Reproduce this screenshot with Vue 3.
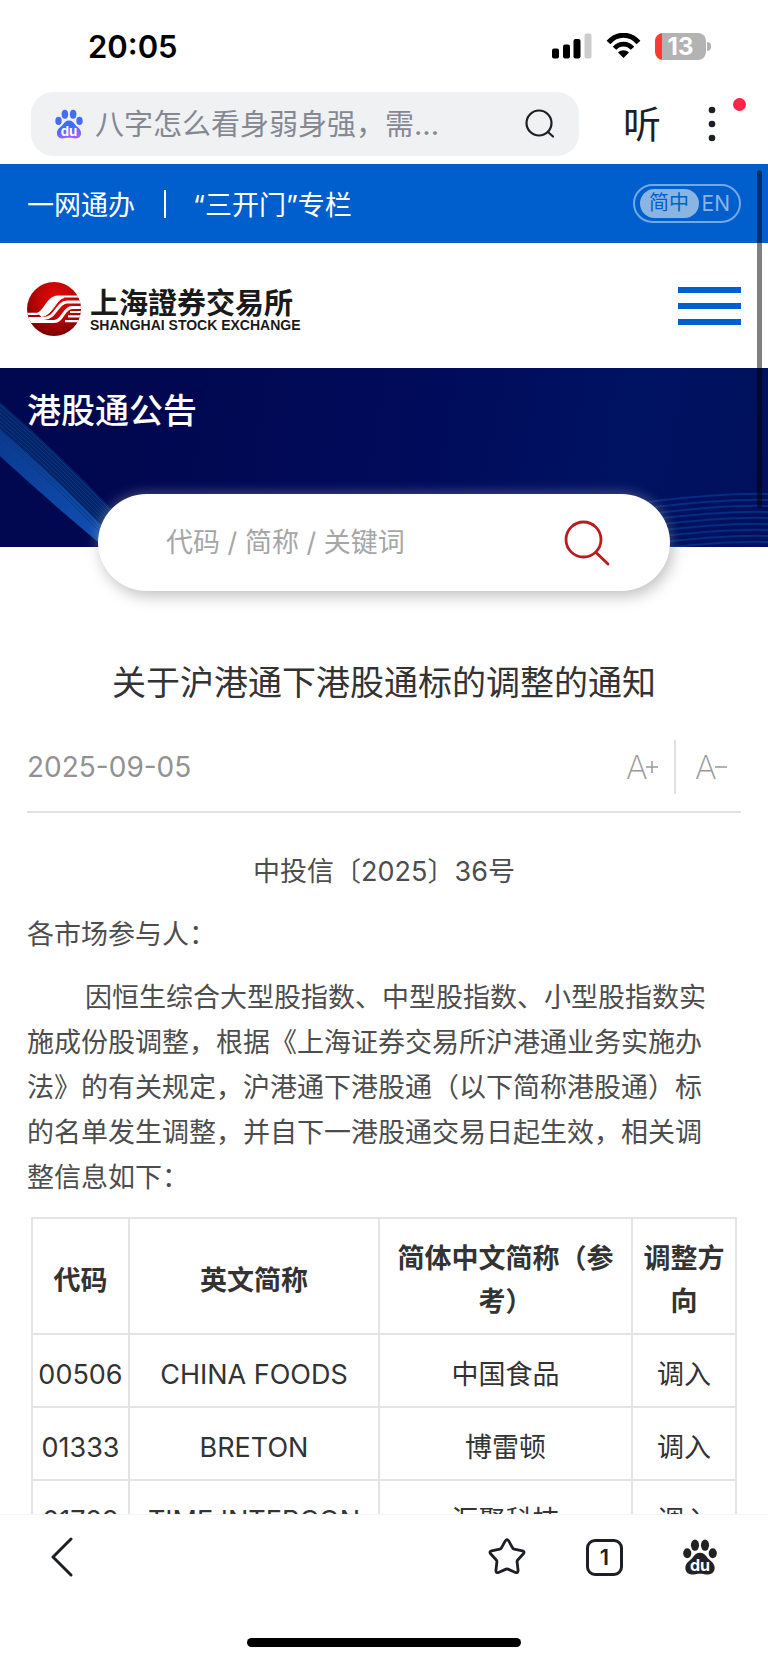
<script setup>
import { ref } from 'vue'

const query = ref('')
const keyword = ref('')
const paragraph =
  '因恒生综合大型股指数、中型股指数、小型股指数实施成份股调整，根据《上海证券交易所沪港通业务实施办法》的有关规定，沪港通下港股通（以下简称港股通）标的名单发生调整，并自下一港股通交易日起生效，相关调整信息如下：'
const rows = [
  { code: '00506', en: 'CHINA FOODS', cn: '中国食品', dir: '调入' },
  { code: '01333', en: 'BRETON', cn: '博雷顿', dir: '调入' },
  { code: '01729', en: 'TIME INTERCON', cn: '汇聚科技', dir: '调入' },
]
const waves = Array.from({ length: 10 }, (_, i) => i * 6)
const strands = Array.from({ length: 9 }, (_, i) => i * 4)
</script>

<template>
  <div class="screen">
    <header class="status">
      <span class="clock">20:05</span>
      <div class="status-icons">
        <svg width="40" height="26" viewBox="0 0 40 26" aria-hidden="true">
          <rect x="0" y="15.500" width="7" height="10" rx="2" />
          <rect x="11" y="11.500" width="7" height="14" rx="2" />
          <rect x="21.500" y="6" width="7" height="19.500" rx="2" />
          <rect x="32.500" y="0.500" width="7" height="25" rx="2" fill="#ccc" />
        </svg>
        <svg width="35" height="26" viewBox="0 0 35 26" aria-hidden="true">
          <path d="M2.500 9.500C11-.2 24-.2 32.500 9.500" fill="none" stroke="#000" stroke-width="5" />
          <path d="M8.500 15.300C13.500 9.700 21.500 9.700 26.500 15.300" fill="none" stroke="#000" stroke-width="4.600" />
          <path d="M12 19.500c3.200-3 7.800-3 11 0L17.500 25z" />
        </svg>
        <div class="battery"><span>13</span></div>
      </div>
    </header>

    <div class="browser-bar">
      <label class="omnibox">
        <svg width="28" height="30" viewBox="0 0 36 38" aria-hidden="true">
          <defs>
            <linearGradient id="paw" x1="0" y1="0" x2="0.300" y2="1">
              <stop offset="0.450" stop-color="#3f6cf5" />
              <stop offset="1" stop-color="#9a62ff" />
            </linearGradient>
          </defs>
          <g fill="#446cf5">
            <ellipse cx="4.500" cy="15" rx="4.100" ry="5.200" />
            <ellipse cx="12.700" cy="6.500" rx="4.200" ry="5.800" />
            <ellipse cx="23.300" cy="6.500" rx="4.200" ry="5.800" />
            <ellipse cx="31.500" cy="15" rx="4.100" ry="5.200" />
          </g>
          <path fill="url(#paw)" d="M18 14.500c3.500 0 5.500 2 7.500 4.800 2.500 3.600 8 5.700 8 11.200 0 4-2.500 7-6.500 7-3.500 0-5.500-.8-9-.8s-5.500.8-9 .8c-4 0-6.500-3-6.500-7 0-5.500 5.500-7.600 8-11.200 2-2.800 4-4.800 7.500-4.800z" />
          <text x="18" y="34" text-anchor="middle" class="du">du</text>
        </svg>
        <input v-model="query" type="text" aria-label="搜索" placeholder="八字怎么看身弱身强，需..." />
        <svg width="30" height="30" viewBox="0 0 30 30" fill="none" stroke="#1d1f26" stroke-width="2.200" stroke-linecap="round" aria-hidden="true">
          <circle cx="14" cy="14" r="12.500" />
          <path d="M23.500 23.500l4.500 4" />
        </svg>
      </label>
      <button class="listen" type="button">听</button>
      <button class="more" type="button" aria-label="更多">
        <svg width="8" height="36" viewBox="0 0 8 36" fill="#1d1f26">
          <circle cx="4" cy="4" r="3.300" /><circle cx="4" cy="18" r="3.300" /><circle cx="4" cy="32" r="3.300" />
        </svg>
        <i class="dot"></i>
      </button>
    </div>

    <main class="viewport">
      <nav class="topnav">
        <a href="#">一网通办</a>
        <i class="sep"></i>
        <a href="#">“三开门”专栏</a>
        <button class="lang" type="button"><b>简中</b><span>EN</span></button>
      </nav>

      <div class="brand">
        <a href="#" class="logo">
          <svg width="54" height="54" viewBox="0 0 54 54" aria-hidden="true">
            <defs>
              <radialGradient id="ball" cx="0.550" cy="0.300" r="0.700">
                <stop offset="0" stop-color="#e60a0a" />
                <stop offset="0.500" stop-color="#c00505" />
                <stop offset="1" stop-color="#7a0000" />
              </radialGradient>
              <clipPath id="round"><circle cx="27" cy="27" r="27" /></clipPath>
            </defs>
            <circle cx="27" cy="27" r="27" fill="url(#ball)" />
            <g clip-path="url(#round)" fill="none" stroke="#fff">
              <path d="M0 31.800H10C17 31.800 20 14.500 31 14.500H54" stroke-width="2.200" />
              <path d="M11 31.500C18 30 21 15.500 31 15.500H37C29 17 25 34.500 14 34.500" fill="#fff" stroke-width="1" />
              <path d="M0 36.500H17C29 36.500 30 20 40 20H54" stroke-width="3" />
              <path d="M0 39.500H27C36 39.500 36 26 45 25.500H54" stroke-width="3" />
              <path d="M41 34.300H54M38 39.200H54M43 30H54" stroke-width="2.200" />
            </g>
          </svg>
          <span class="wordmark">
            <span class="cn">上海證券交易所</span>
            <span class="en">SHANGHAI STOCK EXCHANGE</span>
          </span>
        </a>
        <button class="menu" type="button" aria-label="菜单"><i></i><i></i><i></i></button>
      </div>

      <section class="banner">
        <svg class="ribbon" width="130" height="145" viewBox="0 0 130 145" aria-hidden="true">
          <defs>
            <linearGradient id="beam" x1="0" y1="0" x2="1" y2="1">
              <stop offset="0" stop-color="#0a3a90" />
              <stop offset="1" stop-color="#1050b4" />
            </linearGradient>
          </defs>
          <path d="M0 0Q62 54 122 118V145H104Q50 100 0 54z" fill="#04236a" />
          <path d="M0 28Q58 78 112 134V145H104Q50 100 0 54z" fill="url(#beam)" />
          <path v-for="s in strands" :key="s" :d="`M0 ${s + 3}Q62 ${s + 57} 122 ${s + 121}`" fill="none" stroke="#0a3a80" stroke-width="1" />
        </svg>
        <svg class="ripples" width="120" height="54" viewBox="0 0 120 54" aria-hidden="true">
          <path v-for="w in waves" :key="w" :d="`M0 ${w + 9}C40 ${w + 4} 80 ${w} 120 ${w + 1}`" fill="none" stroke="#062c80" stroke-width="2" />
        </svg>
        <h2>港股通公告</h2>
        <form class="search" @submit.prevent>
          <input v-model="keyword" type="text" aria-label="代码 / 简称 / 关键词" placeholder="代码 / 简称 / 关键词" />
          <button type="submit" aria-label="搜索">
            <svg width="46" height="46" viewBox="0 0 46 46" fill="none" stroke="#b81c1c" stroke-width="2.800" stroke-linecap="round">
              <circle cx="19.500" cy="19.500" r="17.500" />
              <path d="M32 32.500l12 11.500" />
            </svg>
          </button>
        </form>
      </section>

      <article>
        <h1>关于沪港通下港股通标的调整的通知</h1>
        <div class="meta">
          <time datetime="2025-09-05">2025-09-05</time>
          <button class="size larger" type="button" aria-label="放大字号">
            A<svg width="12" height="12" viewBox="0 0 12 12" stroke="#999" stroke-width="1.500"><path d="M0 6h12M6 0v12" /></svg>
          </button>
          <button class="size smaller" type="button" aria-label="缩小字号">
            A<svg width="12" height="12" viewBox="0 0 12 12" stroke="#999" stroke-width="1.500"><path d="M0 6h12" /></svg>
          </button>
        </div>
        <p class="docno">中投信〔2025〕36号</p>
        <p>各市场参与人：</p>
        <p class="body">{{ paragraph }}</p>
        <table>
          <colgroup><col class="c1" /><col class="c2" /><col /><col class="c4" /></colgroup>
          <thead>
            <tr><th>代码</th><th>英文简称</th><th>简体中文简称（参考）</th><th>调整方向</th></tr>
          </thead>
          <tbody>
            <tr v-for="r in rows" :key="r.code">
              <td>{{ r.code }}</td><td>{{ r.en }}</td><td>{{ r.cn }}</td><td>{{ r.dir }}</td>
            </tr>
          </tbody>
        </table>
      </article>
      <i class="scrollbar"></i>
    </main>

    <footer class="toolbar">
      <div class="tools">
        <button type="button" class="back" aria-label="返回">
          <svg width="22" height="40" viewBox="0 0 22 40" fill="none" stroke="#1d1f26" stroke-width="3" stroke-linecap="round" stroke-linejoin="round"><path d="M20 2L2 20l18 18" /></svg>
        </button>
        <button type="button" aria-label="收藏">
          <svg width="38" height="38" viewBox="0 0 38 38" fill="none" stroke="#1d1f26" stroke-width="2.800" stroke-linejoin="round">
            <path d="M17.300 2.900q1.700-2.600 3.400 0l4 7.200q.5.900 1.500 1.100l8.200 1.600q2.700.8 1 3l-5.700 6.200q-.7.800-.6 1.800l1 8.700q0 2.900-2.600 2l-7.600-3.400q-.9-.4-1.800 0l-7.600 3.400q-2.600.9-2.600-2l1-8.700q.1-1-.6-1.800l-5.700-6.200q-1.700-2.200 1-3l8.200-1.600q1-.2 1.500-1.100z" />
          </svg>
        </button>
        <button type="button" class="tab" aria-label="标签页"><span>1</span></button>
        <button type="button" aria-label="首页">
          <svg width="34" height="36" viewBox="0 0 36 38" fill="#222" aria-hidden="true">
            <ellipse cx="4.500" cy="15" rx="4.300" ry="5.300" />
            <ellipse cx="12.700" cy="6.500" rx="4.300" ry="6" />
            <ellipse cx="23.300" cy="6.500" rx="4.300" ry="6" />
            <ellipse cx="31.500" cy="15" rx="4.300" ry="5.300" />
            <path d="M18 14.500c3.500 0 5.500 2 7.500 4.800 2.500 3.600 8 5.700 8 11.200 0 4-2.500 7-6.500 7-3.500 0-5.500-.8-9-.8s-5.500.8-9 .8c-4 0-6.500-3-6.500-7 0-5.500 5.500-7.600 8-11.200 2-2.800 4-4.800 7.500-4.800z" />
            <text x="18" y="34" text-anchor="middle" class="du">du</text>
          </svg>
        </button>
      </div>
      <i class="home"></i>
    </footer>
  </div>
</template>

<style>
body {
  margin: 0;
  background: #fff;
}
</style>

<style scoped>
* {
  box-sizing: border-box;
}
.screen {
  display: flex;
  flex-direction: column;
  height: 100vh;
  overflow: hidden;
  background: #fff;
  color: #333;
  font-family: Inter, "Noto Sans CJK SC", sans-serif;
  font-size: 27px;
}
button {
  padding: 0;
  border: 0;
  background: none;
  color: inherit;
  font: inherit;
  cursor: pointer;
}
input {
  flex: 1;
  min-width: 0;
  padding: 0;
  border: 0;
  outline: 0;
  background: none;
  font: inherit;
}
a {
  color: inherit;
  text-decoration: none;
}
svg {
  display: block;
  flex: none;
}
.du {
  fill: #fff;
  font: 700 17px Inter, sans-serif;
}
.status {
  display: flex;
  flex: none;
  align-items: center;
  justify-content: space-between;
  height: 92px;
  padding: 0 56px 0 88px;
}
.clock {
  color: #000;
  font-size: 31px;
  font-weight: 600;
}
.status-icons {
  display: flex;
  align-items: center;
  gap: 14px;
}
.battery {
  position: relative;
  width: 51px;
  height: 27px;
  margin-right: 6px;
  border-radius: 8px;
  background: linear-gradient(90deg, #ff3b30 7px, #b3b3b3 7px);
  color: #fff;
  font-size: 24px;
  font-weight: 700;
  line-height: 27px;
  text-align: center;
}
.battery::after {
  content: "";
  position: absolute;
  top: 9px;
  right: -5px;
  width: 4px;
  height: 9px;
  border-radius: 0 4px 4px 0;
  background: #b3b3b3;
}
.browser-bar {
  display: flex;
  flex: none;
  align-items: center;
  height: 64px;
  margin: 0 19px 8px 31px;
}
.omnibox {
  display: flex;
  flex: 1;
  align-items: center;
  gap: 12px;
  min-width: 0;
  height: 64px;
  padding: 0 24px;
  border-radius: 22px;
  background: #eff1f3;
  font-size: 29px;
}
.omnibox input::placeholder {
  color: #858893;
  opacity: 1;
}
.listen {
  flex: none;
  margin-left: 44px;
  color: #1d1f26;
  font-size: 38px;
  line-height: 64px;
}
.more {
  position: relative;
  display: flex;
  flex: none;
  align-items: center;
  width: 88px;
  height: 64px;
  padding-left: 47px;
}
.dot {
  position: absolute;
  top: 6px;
  right: 3px;
  width: 13px;
  height: 13px;
  border-radius: 50%;
  background: #ff2449;
}
.viewport {
  position: relative;
  flex: 1;
  min-height: 0;
  overflow: hidden;
}
.topnav {
  display: flex;
  align-items: center;
  height: 79px;
  padding: 0 27px;
  background: #005fcc;
  color: #fff;
}
.sep {
  width: 2px;
  height: 28px;
  margin: 0 27px 0 29px;
  background: #fff;
}
.lang {
  display: flex;
  align-items: center;
  gap: 3px;
  height: 39px;
  margin-left: auto;
  padding: 0 9px 0 5px;
  border: 2px solid #72a8e3;
  border-radius: 20px;
  color: #8ab4e4;
  font-size: 21px;
  line-height: 29px;
}
.lang b {
  width: 59px;
  border-radius: 15px;
  background: #8ab4e2;
  color: #005fcc;
  font-size: 20px;
  font-weight: 400;
}
.brand {
  display: flex;
  align-items: center;
  justify-content: space-between;
  height: 125px;
  padding: 0 27px;
}
.logo {
  display: flex;
  align-items: center;
  gap: 9px;
  padding-top: 6px;
}
.wordmark {
  display: flex;
  flex-direction: column;
  color: #1a1a1a;
}
.cn {
  font: 700 29px/32px "Noto Sans CJK TC", sans-serif;
}
.en {
  font: 700 14px/16px "Liberation Sans", sans-serif;
}
.menu {
  display: grid;
  gap: 10px;
  width: 63px;
}
.menu i {
  height: 6px;
  background: #0060cd;
}
.banner {
  position: relative;
  height: 179px;
  background: linear-gradient(100deg, #010850 20%, #000b5b 55%, #001262 80%, #00105c);
}
.banner h2 {
  position: relative;
  margin: 0;
  padding: 20px 27px 0;
  color: #fff;
  font-size: 34px;
  font-weight: 500;
  line-height: 46px;
}
.ribbon {
  position: absolute;
  bottom: 0;
  left: 0;
}
.ripples {
  position: absolute;
  right: 0;
  bottom: 0;
}
.search {
  position: absolute;
  top: 126px;
  right: 98px;
  left: 98px;
  display: flex;
  align-items: center;
  height: 97px;
  padding: 0 60px 0 68px;
  border-radius: 49px;
  background: #fff;
  box-shadow: 3px 5px 15px rgba(0, 0, 0, 0.25), 0 0 14px rgba(255, 255, 255, 0.35);
}
.search input::placeholder {
  color: #a6a6a6;
  opacity: 1;
}
article {
  padding: 111px 27px 0;
  color: #4d4d4d;
  line-height: 45px;
}
h1 {
  margin: 0;
  color: #333;
  font-size: 34px;
  font-weight: 400;
  line-height: 50px;
  text-align: center;
}
.meta {
  display: flex;
  align-items: center;
  height: 105px;
  margin-bottom: 36px;
  padding-top: 15px;
  border-bottom: 2px solid #e0e0e0;
  color: #929292;
}
.meta time {
  margin-right: auto;
  font-size: 28px;
}
.size {
  display: flex;
  align-items: center;
  width: 65px;
  height: 54px;
  color: #999;
  font-size: 33px;
  font-weight: 200;
  line-height: 54px;
}
.size svg {
  margin-left: -2px;
}
.larger {
  padding-left: 15px;
  border-right: 2px solid #e0e0e0;
}
.smaller {
  padding-left: 19px;
}
p {
  margin: 0 0 18px;
}
.docno {
  text-align: center;
}
.body {
  margin-bottom: 17px;
  padding-right: 20px;
  text-indent: 58px;
}
table {
  width: calc(100% - 8px);
  margin-left: 4px;
  border-collapse: collapse;
  table-layout: fixed;
  color: #333;
  line-height: 43px;
  text-align: center;
}
th,
td {
  padding: 18px 2px 10px;
  border: 2px solid #e4e4e4;
}
.c1 {
  width: 97px;
}
.c2 {
  width: 250px;
}
.c4 {
  width: 104px;
}
.scrollbar {
  position: absolute;
  top: 6px;
  right: 6px;
  width: 5px;
  height: 25%;
  border-radius: 3px;
  background: rgba(0, 0, 0, 0.5);
}
.toolbar {
  display: flex;
  flex: none;
  flex-direction: column;
  align-items: center;
  justify-content: space-between;
  height: 148px;
  padding-bottom: 15px;
  border-top: 1px solid #f5f5f5;
  background: #fff;
}
.tools {
  display: flex;
  align-items: center;
  gap: 60px;
  width: 100%;
  height: 84px;
  padding: 0 51px;
}
.back {
  margin-right: auto;
}
.tab {
  width: 37px;
  height: 37px;
  border: 3px solid #1d1f26;
  border-radius: 9px;
  color: #1d1f26;
  font-size: 22px;
  font-weight: 600;
  line-height: 30px;
}
.home {
  width: 274px;
  height: 9px;
  border-radius: 5px;
  background: #000;
}
</style>
